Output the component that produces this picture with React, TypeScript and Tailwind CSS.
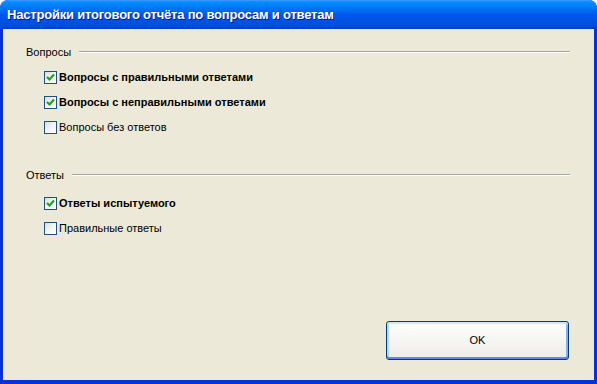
import React from 'react'

const GROUPS = [
  {
    title: 'Вопросы',
    top: 'pt-[16px]',
    gap: 'mt-[12px]',
    items: [
      { label: 'Вопросы с правильными ответами', checked: true },
      { label: 'Вопросы с неправильными ответами', checked: true },
      { label: 'Вопросы без ответов', checked: false },
    ],
  },
  {
    title: 'Ответы',
    top: 'pt-[34px]',
    gap: 'mt-[15px]',
    items: [
      { label: 'Ответы испытуемого', checked: true },
      { label: 'Правильные ответы', checked: false },
    ],
  },
]

function CheckBox({ checked }: { checked: boolean }) {
  return (
    <div className="w-[13px] h-[13px] border border-[#1c5180] bg-gradient-to-br from-[#dcdcd7] via-[#f4f4f0] to-white flex items-center justify-center shrink-0">
      {checked && (
        <svg width="9" height="9" viewBox="0 0 9 9">
          <path d="M1 4 L3.5 6.5 L8 1.5" fill="none" stroke="#21a121" strokeWidth="2.2" />
        </svg>
      )}
    </div>
  )
}

export default function App() {
  return (
    <div className="w-[597px] h-[384px] flex flex-col bg-[#0831d9] rounded-t-[8px] overflow-hidden font-['Liberation_Sans',sans-serif]">
      {/* Title bar */}
      <div className="h-[29px] shrink-0 flex items-center pl-[7px] rounded-t-[8px] bg-gradient-to-b from-[#0997ff] via-[#0058ee] to-[#0048d8] shadow-[inset_0_1px_0_#3d95ff,inset_0_-2px_0_#003dd0]">
        <span className="text-white text-[13px] font-bold tracking-[-0.2px] [text-shadow:1px_1px_0_#0a1883]">
          Настройки итогового отчёта по вопросам и ответам
        </span>
      </div>

      {/* Body */}
      <div className="flex-1 mx-[3px] mb-[4px] bg-[#ece9d8] flex flex-col text-[11px] text-black">
        {GROUPS.map((group) => (
          <div key={group.title} className={group.top}>
            <div className="flex items-center pl-[23px] pr-[24px] h-[14px]">
              <span className="leading-[14px] mr-[8px]">{group.title}</span>
              <div className="flex-1 border-t border-[#a6a6a0] border-b border-b-white" />
            </div>
            <div className={`flex flex-col gap-[12px] pl-[41px] ${group.gap}`}>
              {group.items.map((item) => (
                <div key={item.label} className="flex items-center h-[13px] gap-[2px]">
                  <CheckBox checked={item.checked} />
                  <span className={item.checked ? 'font-bold' : ''}>{item.label}</span>
                </div>
              ))}
            </div>
          </div>
        ))}

        <div className="mt-auto flex justify-end pr-[25px] pb-[20px]">
          <button className="w-[183px] h-[39px] rounded-[3px] border border-[#003c74] bg-gradient-to-b from-white to-[#ecebe6] shadow-[inset_0_-2px_0_#6982ee,inset_0_2px_0_#cee7ff,inset_2px_0_0_#bcd4f6,inset_-2px_0_0_#89ade4] text-[11px] text-black">
            OK
          </button>
        </div>
      </div>
    </div>
  )
}
